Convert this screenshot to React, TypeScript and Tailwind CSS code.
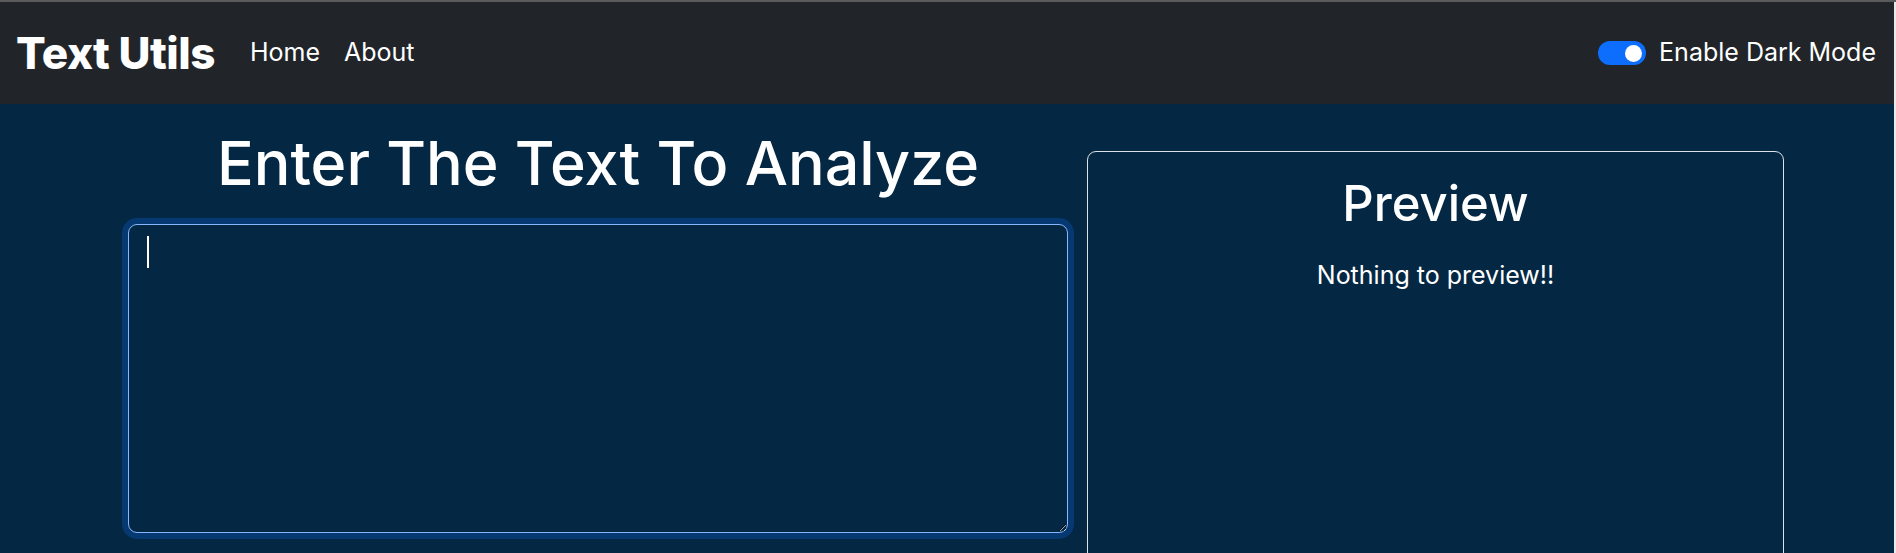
import { useState } from 'react'

const FONT = "font-['Inter',_'Open_Sans',_sans-serif]"

// ─── Top bar ─────────────────────────────────────────────────────────────────
function Navbar() {
  const [dark, setDark] = useState(true)
  return (
    <nav className="h-[102px] shrink-0 bg-[#212529] flex items-center justify-between pl-[16px] pr-[18px]">
      <div className="flex items-center">
        <a className="text-[44px] font-extrabold text-white tracking-[-0.5px] mr-[23px] leading-none">Text Utils</a>
        <ul className="flex items-center">
          <li><a className="px-[12px] text-[25px] text-white">Home</a></li>
          <li><a className="px-[12px] text-[25px] text-white">About</a></li>
        </ul>
      </div>
      <label className="flex items-center gap-[13px] cursor-pointer" onClick={() => setDark(d => !d)}>
        <span className={`w-[48px] h-[24px] rounded-full flex items-center px-[4px] ${dark ? 'bg-[#0d6efd] justify-end' : 'bg-white justify-start border border-gray-400'}`}>
          <span className={`w-[17px] h-[17px] rounded-full ${dark ? 'bg-white' : 'bg-gray-400'}`} />
        </span>
        <span className="text-[25px] text-white">Enable Dark Mode</span>
      </label>
    </nav>
  )
}

export default function App() {
  const [text, setText] = useState('')

  return (
    <div className={`h-[553px] overflow-hidden flex flex-col bg-[#e9e9e9] ${FONT}`}>
      <div className="h-[2px] bg-[#5b5b5b] shrink-0" />
      <div className="flex flex-1 min-h-0">
        <div className="flex-1 flex flex-col bg-[#042743]">
          <Navbar />

          {/* ── Main row ─────────────────────────────────────────────────── */}
          <main className="flex gap-[19px] pl-[128px]">
            <section className="w-[940px] flex flex-col">
              <h1 className="text-[61px] font-medium text-white text-center leading-[1.2] mt-[23px] mb-[24px]">
                Enter The Text To Analyze
              </h1>
              <div className="relative">
                <textarea
                  value={text}
                  onChange={e => setText(e.target.value)}
                  className="block w-full h-[309px] bg-[#042743] text-white text-[24px] leading-[1.5] px-[18px] py-[9px] rounded-[9px] border border-[#86b7fe] shadow-[0_0_0_6px_rgba(13,110,253,0.25)] outline-none"
                />
                {text === '' && (
                  <span className="absolute left-[19px] top-[12px] w-[2px] h-[32px] bg-white pointer-events-none" />
                )}
              </div>
            </section>

            <section className="w-[697px] mt-[47px] h-[420px] border border-[#dee2e6] rounded-[9px] flex flex-col items-center">
              <h2 className="text-[49px] font-medium text-white leading-[1.2] mt-[23px]">Preview</h2>
              <p className="text-[25px] text-white mt-[23px]">{text || 'Nothing to preview!!'}</p>
            </section>
          </main>
        </div>
        <div className="w-[2px] shrink-0 bg-[#e9e9e9]" />
      </div>
    </div>
  )
}
